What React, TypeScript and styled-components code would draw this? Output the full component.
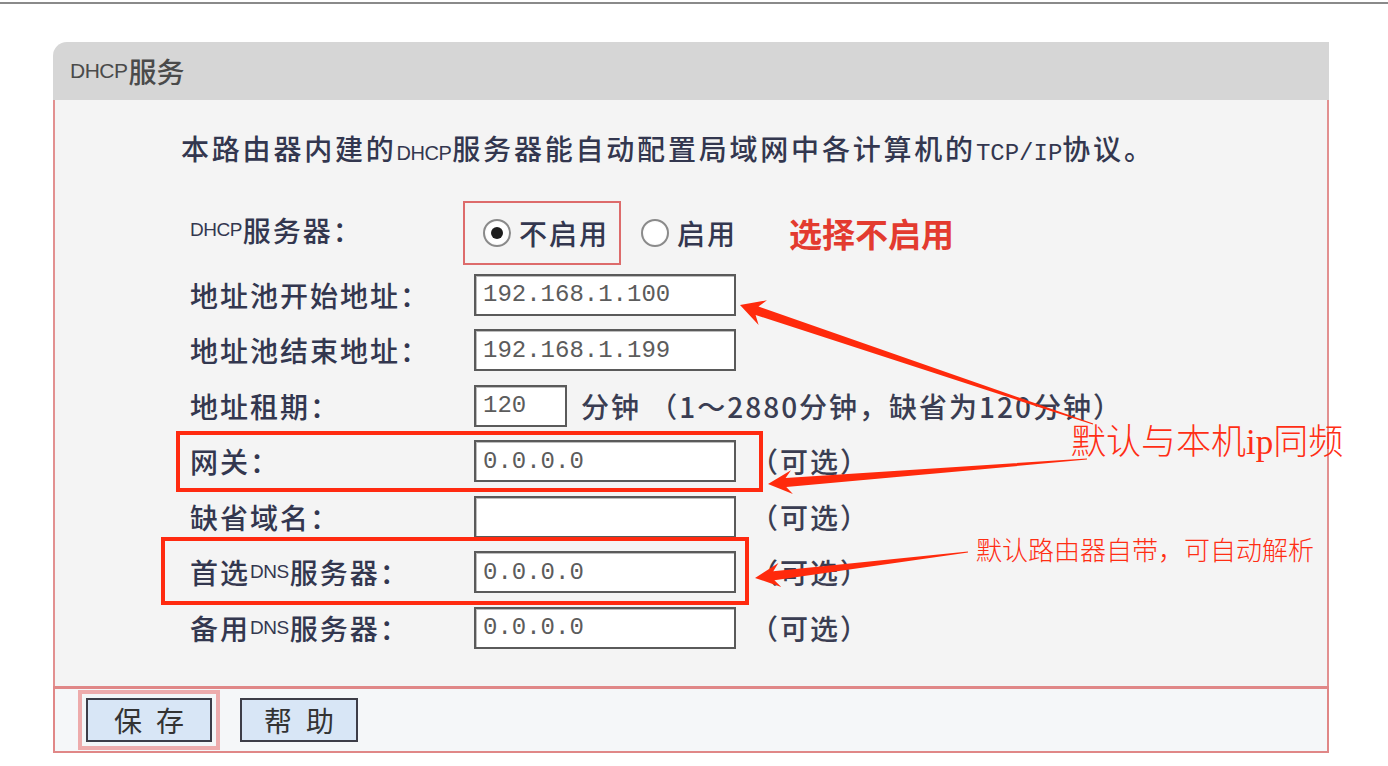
import React from "react";
import styled, { createGlobalStyle } from "styled-components";

const GlobalStyle = createGlobalStyle`
  html, body { margin: 0; padding: 0; background: #ffffff; }
  body { font-family: "Noto Sans CJK SC", "Noto Sans", sans-serif; }
  * { box-sizing: border-box; }
`;

const CJK = `"Noto Sans CJK SC", "Noto Sans", sans-serif`;

const Page = styled.div`
  position: relative;
  width: 1388px;
  height: 766px;
  overflow: hidden;
  background: #ffffff;
`;

const TopRule = styled.div`
  height: 2px;
  margin-top: 2px;
  background: #8a8a8a;
`;

const Panel = styled.div`
  margin: 38px 0 0 53px;
  width: 1276px;
`;

const Header = styled.div`
  height: 58px;
  background: #d6d6d6;
  border-top-left-radius: 14px;
  padding-left: 17px;
  display: flex;
  align-items: center;
  font-family: ${CJK};
  font-size: 28px;
  font-weight: 500;
  color: #4a4a4a;
`;

const SmallLatin = styled.span<{ $size?: number }>`
  font-family: "Liberation Sans", "DejaVu Sans", sans-serif;
  font-size: ${(p) => p.$size ?? 19}px;
  letter-spacing: -0.5px;
  margin-right: 1px;
`;

const MonoLatin = styled.span`
  font-family: "Liberation Mono", "DejaVu Sans Mono", monospace;
  font-size: 24px;
  letter-spacing: 0;
`;

const Body = styled.div`
  background: #f4f4f4;
  border-left: 2px solid #e29090;
  border-right: 2px solid #e29090;
  padding: 30px 0 37px 126px;
`;

const Intro = styled.div`
  font-family: ${CJK};
  font-size: 28px;
  font-weight: 500;
  line-height: 36px;
  letter-spacing: 2.8px;
  color: #33374f;
`;

const Form = styled.div`
  margin: 28px 0 0 9px;
  display: grid;
  grid-template-columns: 284px auto;
  grid-template-rows: 60px repeat(7, 42px);
  row-gap: 13.5px;
`;

const Label = styled.div`
  display: flex;
  align-items: center;
  font-family: ${CJK};
  font-size: 28px;
  font-weight: 500;
  letter-spacing: 2px;
  color: #33374f;
  white-space: nowrap;
`;

const Cell = styled.div`
  display: flex;
  align-items: center;
  gap: 14px;
  font-family: ${CJK};
  font-size: 28px;
  color: #3a3d52;
  white-space: nowrap;
`;

const RadioGroup = styled.div`
  display: flex;
  align-items: center;
  margin: 6px 0 0 -11px;
`;

const RadioOption = styled.label<{ $boxed?: boolean }>`
  display: flex;
  align-items: center;
  gap: 8px;
  height: 64px;
  padding: 0 10px 0 18px;
  border: 2px solid ${(p) => (p.$boxed ? "#dd6b6b" : "transparent")};
  font-family: ${CJK};
  font-size: 28px;
  font-weight: 500;
  letter-spacing: 2px;
  color: #33374f;
`;

const RadioDot = styled.span<{ $on?: boolean }>`
  width: 28px;
  height: 28px;
  border-radius: 50%;
  border: 2px solid #8a8a8a;
  background: radial-gradient(circle, #ffffff 60%, #e6e6e6 100%);
  display: flex;
  align-items: center;
  justify-content: center;
  &::after {
    content: "";
    width: 12px;
    height: 12px;
    border-radius: 50%;
    background: ${(p) => (p.$on ? "#1e1e1e" : "transparent")};
  }
`;

const Hint = styled.span`
  margin-left: 40px;
  font-family: ${CJK};
  font-size: 33px;
  font-weight: 700;
  color: #e33b2f;
`;

const Field = styled.div<{ $w: number }>`
  width: ${(p) => p.$w}px;
  height: 42px;
  border: 2px solid #5a5a5a;
  box-shadow: inset 1px 1px 0 #bdbdbd;
  background: #ffffff;
  display: flex;
  align-items: center;
  padding-left: 7px;
  font-family: "Liberation Mono", "DejaVu Sans Mono", monospace;
  font-size: 24px;
  color: #5c5c5c;
`;

const Note = styled.span`
  font-family: ${CJK};
  font-size: 28px;
  font-weight: 500;
  letter-spacing: 2px;
  color: #3a3d52;
`;

const Footer = styled.div`
  height: 67px;
  background: #f5f7f9;
  border: 2px solid #e08787;
  border-top-width: 3px;
  display: flex;
  align-items: center;
  gap: 28px;
  padding-left: 31px;
`;

const Button = styled.div<{ $w: number; $focus?: boolean }>`
  width: ${(p) => p.$w}px;
  height: 44px;
  border: 2px solid #3d3d48;
  background: #d8e6f6;
  display: flex;
  align-items: center;
  justify-content: center;
  font-family: ${CJK};
  font-size: 28px;
  letter-spacing: 14px;
  text-indent: 14px;
  color: #333;
  box-shadow: ${(p) =>
    p.$focus ? "0 0 0 4px #f4f6f8, 0 0 0 8px rgba(230, 110, 110, 0.55)" : "none"};
`;

const Overlay = styled.div`
  position: absolute;
  inset: 0;
  pointer-events: none;
`;

const MarkBox = styled.div<{ $x: number; $y: number; $w: number; $h: number }>`
  position: absolute;
  left: ${(p) => p.$x}px;
  top: ${(p) => p.$y}px;
  width: ${(p) => p.$w}px;
  height: ${(p) => p.$h}px;
  border: 4px solid #ff2a10;
`;

const MarkText = styled.div<{ $x: number; $y: number; $size: number }>`
  position: absolute;
  left: ${(p) => p.$x}px;
  top: ${(p) => p.$y}px;
  font-family: ${CJK};
  font-weight: 300;
  font-size: ${(p) => p.$size}px;
  line-height: 1;
  color: #ff2e14;
  white-space: nowrap;
`;

const SerifLatin = styled.span`
  font-family: "Liberation Serif", serif;
`;

const ArrowLayer = styled.svg`
  position: absolute;
  left: 0;
  top: 0;
`;

type Pt = [number, number];

function arrowPoints(tip: Pt, tail: Pt, headLen: number, headHalf: number, notch: number, neckHalf: number, tailHalf: number) {
  const dx = tail[0] - tip[0];
  const dy = tail[1] - tip[1];
  const L = Math.hypot(dx, dy);
  const ux = dx / L;
  const uy = dy / L;
  const nx = -uy;
  const ny = ux;
  const p = (d: number, w: number) => `${(tip[0] + ux * d + nx * w).toFixed(1)},${(tip[1] + uy * d + ny * w).toFixed(1)}`;
  return [
    p(0, 0),
    p(headLen, headHalf),
    p(headLen - notch, neckHalf),
    p(L, tailHalf),
    p(L, -tailHalf),
    p(headLen - notch, -neckHalf),
    p(headLen, -headHalf),
  ].join(" ");
}

const arrows: { tip: Pt; tail: Pt; head: number; half: number }[] = [
  { tip: [740, 305], tail: [1093, 424], head: 24, half: 13 },
  { tip: [768, 484], tail: [1087, 459], head: 24, half: 12 },
  { tip: [755, 578], tail: [968, 552], head: 25, half: 12 },
];

export default function App() {
  return (
    <>
      <GlobalStyle />
      <Page>
        <TopRule />
        <Panel>
          <Header>
            <SmallLatin $size={21}>DHCP</SmallLatin>服务
          </Header>
          <Body>
            <Intro>
              本路由器内建的<SmallLatin $size={20}>DHCP</SmallLatin>服务器能自动配置局域网中各计算机的<MonoLatin>TCP/IP</MonoLatin>协议。
            </Intro>
            <Form>
              <Label>
                <SmallLatin>DHCP</SmallLatin>服务器：
              </Label>
              <Cell>
                <RadioGroup>
                  <RadioOption $boxed>
                    <RadioDot $on />
                    不启用
                  </RadioOption>
                  <RadioOption>
                    <RadioDot />
                    启用
                  </RadioOption>
                  <Hint>选择不启用</Hint>
                </RadioGroup>
              </Cell>

              <Label>地址池开始地址：</Label>
              <Cell>
                <Field $w={262}>192.168.1.100</Field>
              </Cell>

              <Label>地址池结束地址：</Label>
              <Cell>
                <Field $w={262}>192.168.1.199</Field>
              </Cell>

              <Label>地址租期：</Label>
              <Cell>
                <Field $w={93}>120</Field>
                <Note>分钟 （1～2880分钟，缺省为120分钟）</Note>
              </Cell>

              <Label>网关：</Label>
              <Cell>
                <Field $w={262}>0.0.0.0</Field>
                <Note>（可选）</Note>
              </Cell>

              <Label>缺省域名：</Label>
              <Cell>
                <Field $w={262} />
                <Note>（可选）</Note>
              </Cell>

              <Label>
                首选<SmallLatin>DNS</SmallLatin>服务器：
              </Label>
              <Cell>
                <Field $w={262}>0.0.0.0</Field>
                <Note>（可选）</Note>
              </Cell>

              <Label>
                备用<SmallLatin>DNS</SmallLatin>服务器：
              </Label>
              <Cell>
                <Field $w={262}>0.0.0.0</Field>
                <Note>（可选）</Note>
              </Cell>
            </Form>
          </Body>
          <Footer>
            <Button $w={126} $focus>
              保存
            </Button>
            <Button $w={118}>帮助</Button>
          </Footer>
        </Panel>

        <Overlay>
          <MarkBox $x={176} $y={431} $w={587} $h={61} />
          <MarkBox $x={161} $y={537} $w={588} $h={68} />
          <ArrowLayer width={1388} height={766} viewBox="0 0 1388 766">
            {arrows.map((a, i) => (
              <polygon key={i} points={arrowPoints(a.tip, a.tail, a.head, a.half, 6, 4.5, 0.6)} fill="#ff2a0c" />
            ))}
          </ArrowLayer>
          <MarkText $x={1071} $y={421} $size={35}>
            默认与本机<SerifLatin>ip</SerifLatin>同频
          </MarkText>
          <MarkText $x={976} $y={536} $size={26}>
            默认路由器自带，可自动解析
          </MarkText>
        </Overlay>
      </Page>
    </>
  );
}
